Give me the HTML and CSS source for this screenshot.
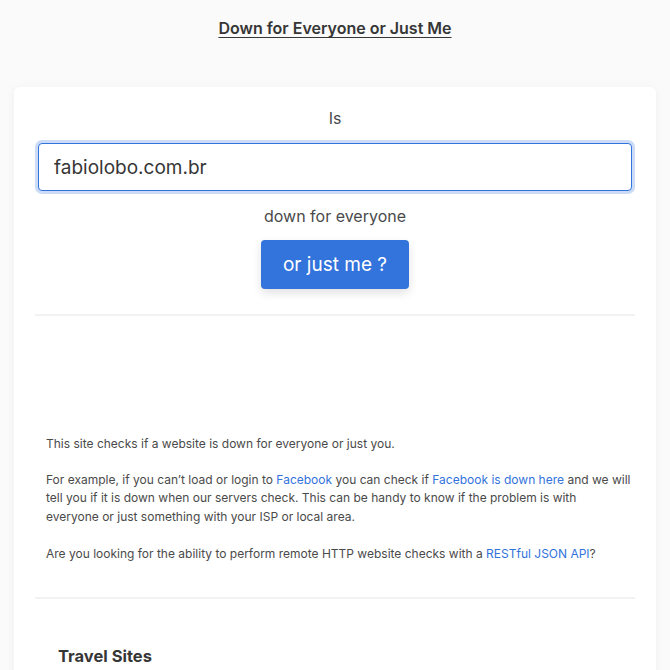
FILE: index.html
```html
<!DOCTYPE html>
<html>
<head>
<meta charset="utf-8">
<link rel="stylesheet" href="styles.css">
</head>
<body>
<header class="header">
  <a class="title" href="#">Down for Everyone or Just Me</a>
</header>
<main class="card">
  <form class="check">
    <div class="label">Is</div>
    <input class="domain" type="text" value="fabiolobo.com.br">
    <div class="label">down for everyone</div>
    <button class="btn" type="button">or just me ?</button>
  </form>
  <hr class="rule">
  <div class="spacer"></div>
  <section class="about">
    <p>This site checks if a website is down for everyone or just you.</p>
    <p class="example">For example, if you can’t load or login to <a href="#">Facebook</a> you can check if <a href="#">Facebook is down here</a> and we will tell you if it is down when our servers check. This can be handy to know if the problem is with<br>everyone or just something with your ISP or local area.</p>
    <p class="last">Are you looking for the ability to perform remote HTTP website checks with a <a href="#">RESTful JSON API</a>?</p>
  </section>
  <hr class="rule">
  <section class="sites">
    <h2 class="sites-title">Travel Sites</h2>
  </section>
</main>
</body>
</html>
```
FILE: styles.css
```css
html, body {
  margin: 0;
  padding: 0;
}
body {
  background: #fafafa;
  font-family: Inter, "Noto Sans", sans-serif;
  color: #4a4a4a;
}
.header {
  height: 87px;
  box-sizing: border-box;
  padding-top: 18px;
  text-align: center;
}
.title {
  font-size: 16px;
  line-height: 20px;
  font-weight: 600;
  color: #363636;
  text-decoration: underline;
  text-underline-offset: 3px;
}
.card {
  margin: 0 14px;
  background: #fff;
  border-radius: 6px;
  box-shadow: 0 2px 10px rgba(0, 0, 0, 0.05);
  padding-bottom: 20px;
}
.check {
  padding: 19px 24px 0;
  display: flex;
  flex-direction: column;
  align-items: center;
}
.label {
  font-size: 16px;
  line-height: 24px;
  color: #4a4a4a;
}
.domain {
  box-sizing: border-box;
  width: 100%;
  height: 48px;
  margin: 13px 0 13px;
  padding: 0 15px;
  font-family: inherit;
  font-size: 19px;
  color: #363636;
  border: 1px solid #3273dc;
  border-radius: 4px;
  box-shadow: 0 0 0 3px rgba(50, 115, 220, 0.25);
  outline: none;
}
.btn {
  margin-top: 12px;
  width: 148px;
  height: 49px;
  background: #3273dc;
  color: #fff;
  border: none;
  border-radius: 4px;
  font-family: inherit;
  font-size: 19px;
  box-shadow: 0 4px 10px rgba(0, 0, 0, 0.12);
}
.rule {
  margin: 25px 21px 0;
  border: none;
  height: 2px;
  background: #f2f2f2;
}
.spacer {
  height: 119px;
}
.about {
  padding: 0 20px 0 32px;
  font-size: 12px;
  line-height: 18.5px;
  color: #4a4a4a;
}
.about p {
  margin: 0 0 17px;
}
.about .example {
  margin-bottom: 19px;
}
.about .last {
  margin-bottom: 33px;
}
.about a {
  color: #3273dc;
  text-decoration: none;
}
.about + .rule {
  margin-top: 0;
}
.sites {
  padding: 47px 44px 0;
}
.sites-title {
  margin: 0;
  font-size: 16.5px;
  line-height: 20px;
  font-weight: 700;
  color: #363636;
}
```
